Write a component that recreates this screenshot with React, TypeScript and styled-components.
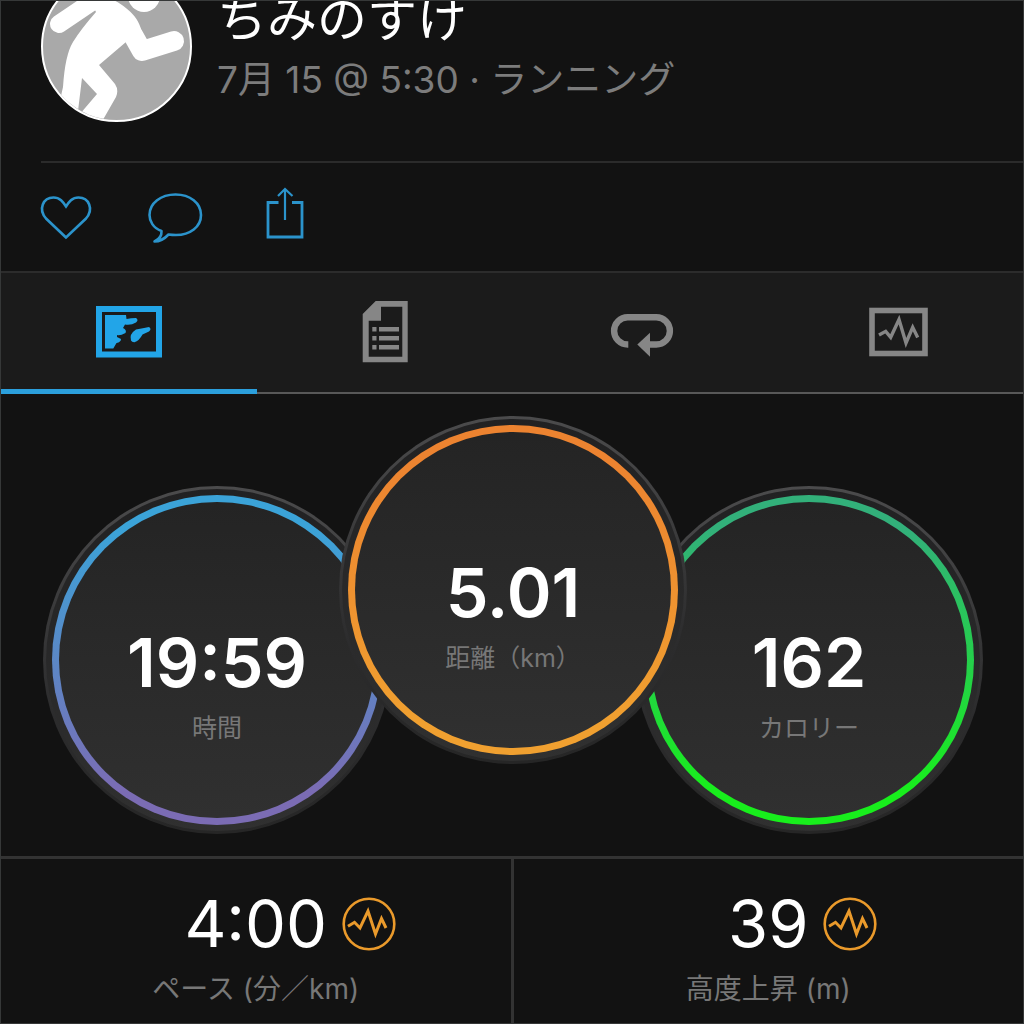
import React from 'react';
import styled, { createGlobalStyle } from 'styled-components';

const GlobalStyle = createGlobalStyle`
  *, *::before, *::after { box-sizing: border-box; }
  body {
    margin: 0;
    background: #121212;
    color: #fff;
    font-family: Inter, "Noto Sans CJK JP", sans-serif;
  }
  button {
    margin: 0;
    padding: 0;
    border: 0;
    background: none;
    cursor: pointer;
  }
  svg { display: block; overflow: visible; }
`;

const Screen = styled.main`
  display: flex;
  flex-direction: column;
  min-height: 100vh;
  border: 1px solid #363838;
  overflow: hidden;
`;

const Header = styled.header`
  display: flex;
  align-items: flex-end;
  gap: 25px;
  height: 162px;
  margin-left: 40px;
  padding-bottom: 39px;
  border-bottom: 2px solid #2b2b2b;
  overflow: hidden;
`;

const Avatar = styled.div`
  flex: none;
  width: 151px;
  height: 151px;
  border: 2px solid #fff;
  border-radius: 50%;
  background: #a9a9a9;
  overflow: hidden;
`;

const Identity = styled.div`
  display: flex;
  flex-direction: column;
  gap: 5px;
  padding-bottom: 16px;
  white-space: nowrap;
`;

const Name = styled.h1`
  margin: 0;
  font-size: 50px;
  font-weight: 400;
  line-height: 60px;
`;

const When = styled.p`
  margin: 0;
  color: #7c7c7c;
  font-size: 37px;
  line-height: 52px;
`;

const Actions = styled.div`
  display: flex;
  align-items: center;
  gap: 54px;
  height: 108px;
  padding-left: 37px;
`;

const ActionButton = styled.button`
  width: 56px;
  height: 56px;
  color: #2b93cb;
`;

const Tabs = styled.nav`
  display: grid;
  grid-template-columns: repeat(4, 1fr);
  height: 123px;
  border-top: 2px solid #2c2c2c;
  background: #1b1b1b;
`;

const Tab = styled.button<{ $active?: boolean }>`
  display: flex;
  align-items: center;
  justify-content: center;
  padding-bottom: 6px;
  color: ${({ $active }) => ($active ? '#22a5e8' : '#868686')};
  box-shadow: inset 0 ${({ $active }) => ($active ? '-5px #2b9fdc' : '-2px #585858')};
`;

const Dials = styled.section`
  display: flex;
  align-items: flex-end;
  justify-content: center;
  padding: 22px 0 22px 2px;
`;

const Dial = styled.article<{ $raised?: boolean }>`
  position: relative;
  z-index: ${({ $raised }) => ($raised ? 1 : 0)};
  flex: none;
  width: 348px;
  height: 348px;
  margin: ${({ $raised }) => ($raised ? '0 -52px 70px' : '0')};
  padding: 6px;
  border: 3px solid transparent;
  border-radius: 50%;
  background:
    linear-gradient(#212122, #303030) padding-box,
    linear-gradient(#4b4b4c, #2c2c2d 65%, #262626) border-box;
`;

const Ring = styled.div<{ $from: string; $to: string }>`
  display: flex;
  flex-direction: column;
  align-items: center;
  height: 100%;
  padding-top: 118px;
  border: 7px solid transparent;
  border-radius: 50%;
  background:
    linear-gradient(#242424, #303030) padding-box,
    linear-gradient(${({ $from, $to }) => `${$from} 10%, ${$to} 90%`}) border-box;
`;

const DialValue = styled.strong`
  font-size: 68px;
  font-weight: 600;
  line-height: 84px;
`;

const DialLabel = styled.span`
  color: #777;
  font-size: 25px;
  line-height: 48px;
`;

const Stats = styled.section`
  display: grid;
  grid-template-columns: 1fr 1fr;
  gap: 3px;
  flex: 1;
  border-top: 3px solid #333;
  background: #333;
`;

const Stat = styled.article`
  display: flex;
  flex-direction: column;
  align-items: center;
  padding-top: 25px;
  background: #121212;
`;

const StatRow = styled.div`
  display: grid;
  grid-template-columns: 1fr auto 1fr;
  align-items: center;
  gap: 15px;
  width: 100%;
`;

const StatValue = styled.strong`
  grid-column: 2;
  font-size: 65px;
  font-weight: 400;
  line-height: 80px;
`;

const StatLabel = styled.span`
  color: #777;
  font-size: 28px;
  line-height: 50px;
`;

const Runner = () => (
  <svg width="100%" height="100%" viewBox="43 -26 147 147" fill="#fff" stroke="#fff" strokeLinecap="round" aria-hidden="true">
    <circle cx="144" cy="-3" r="16" stroke="none" />
    <path d="M59 25 L96 0" strokeWidth="18" />
    <path d="M133 36 L142 52 L174 42" fill="none" strokeWidth="20" strokeLinejoin="round" />
    <path stroke="none" d="M84 -10 L106 -3 C124 6 143 17 143 43 L126 43 L99 66 L115 85 Q119 91 116 98 L100 126 L74 122 L97 95 L82 79 L78 112 L59 106 L63 88 Q65 56 73 43 Q81 30 96 13 Z" />
  </svg>
);

const HeartIcon = () => (
  <svg width="56" height="56" fill="none" stroke="currentColor" strokeWidth="2.6" aria-hidden="true">
    <path d="M28 48.500 L8 29.500 C0 20 5 8.500 15.500 8.500 C22 8.500 25 13 28 17.500 C31 13 34 8.500 40.500 8.500 C51 8.500 56 20 48 29.500 Z" />
  </svg>
);

const CommentIcon = () => (
  <svg width="56" height="56" fill="none" stroke="currentColor" strokeWidth="2.600" strokeLinejoin="round" aria-hidden="true">
    <path d="M13.500 42 C5 39 1.500 32 1.500 26 C1.500 14 13 5.500 27.500 5.500 S53 14 53 26 S42 46 28 46 Q24 46 20.500 45.500 Q14 52.500 6.500 52.500 Q14 49 13.500 42 Z" />
  </svg>
);

const ShareIcon = () => (
  <svg width="56" height="56" fill="none" stroke="currentColor" strokeWidth="2.800" aria-hidden="true">
    <path d="M20.500 13.500 H10 V48 H44 V13.500 H34" />
    <path d="M27 0 V31 M20 7 L27 0 L34.500 7" strokeWidth="2.200" />
  </svg>
);

const MapIcon = () => (
  <svg width="68" height="64" fill="currentColor" aria-hidden="true">
    <rect x="4" y="10" width="60" height="45.500" fill="none" stroke="currentColor" strokeWidth="6" />
    <path d="M10 16 H31 L31.500 20 Q36 19 41 19 Q44 21 41 23.500 Q36 26.500 30 25.500 L28 29 Q32 31 30.500 34 Q25 37 22 36 V38 L26 40 Q26 43 21.500 44 L18.300 49.500 H10 Z" />
    <path d="M36 41.500 Q34 35 41 30.500 Q48 29 54 28 Q57 30 54 32.500 L47.500 35.500 Q44 42 39.500 43.300 Q37 43.500 36 41.500 Z" />
  </svg>
);

const NotesIcon = () => (
  <svg width="68" height="64" fill="currentColor" aria-hidden="true">
    <path fillRule="evenodd" d="M12.700 15 L25.700 2 H57.700 V63.300 H12.700 Z M31 7.700 V21.700 H18.700 V57.700 H52.300 V7.700 Z" />
    <path d="M22.300 28 h4.200 v4.500 h-4.200 Z M22.300 37 h4.200 v4.500 h-4.200 Z M22.300 46 h4.200 v4.500 h-4.200 Z M29 28 h20 v4.500 h-20 Z M29 37 h20 v4.500 h-20 Z M29 46 h20 v4.500 h-20 Z" />
  </svg>
);

const LapIcon = () => (
  <svg width="68" height="64" aria-hidden="true">
    <path d="M22.300 45.500 H21.700 A13.600 13.600 0 0 1 21.700 18.300 H50.300 A13.600 13.600 0 0 1 50.300 45.500 H42" fill="none" stroke="currentColor" strokeWidth="6.400" />
    <path d="M31.300 45.500 L44 33.700 V57.700 Z" fill="currentColor" />
  </svg>
);

const ChartIcon = () => (
  <svg width="68" height="64" fill="none" stroke="currentColor" aria-hidden="true">
    <rect x="11" y="11.500" width="53" height="43" strokeWidth="5.600" />
    <path d="M18 36 L24.700 32.300 L29.700 38.300 L38 20.500 L45 44 L51.700 28.300 L56.700 38.500" strokeWidth="3.400" />
  </svg>
);

const PulseBadge = () => (
  <svg width="54" height="54" fill="none" stroke="#ea9a2b" aria-hidden="true">
    <circle cx="27" cy="27" r="25.300" strokeWidth="2.600" />
    <path d="M6 29.300 L12.500 25.300 L18 31 L26 14 L33.500 37 L39.500 21.500 L44 31" strokeWidth="3" />
  </svg>
);

const actions = [
  { name: 'いいね', Icon: HeartIcon },
  { name: 'コメント', Icon: CommentIcon },
  { name: '共有', Icon: ShareIcon },
];

const tabs = [
  { name: '概要', Icon: MapIcon, active: true },
  { name: '詳細', Icon: NotesIcon },
  { name: 'ラップ', Icon: LapIcon },
  { name: 'グラフ', Icon: ChartIcon },
];

const dials = [
  { value: '19:59', label: '時間', from: '#3ba3d8', to: '#7b6cb4' },
  { value: '5.01', label: '距離（km）', from: '#ec8330', to: '#f0a030', raised: true },
  { value: '162', label: 'カロリー', from: '#32b07a', to: '#18ee1c' },
];

const stats = [
  { value: '4:00', label: 'ペース (分／km)' },
  { value: '39', label: '高度上昇 (m)' },
];

export default function App() {
  return (
    <>
      <GlobalStyle />
      <Screen lang="ja">
        <Header>
          <Avatar><Runner /></Avatar>
          <Identity>
            <Name>ちみのすけ</Name>
            <When>7月 15 @ 5:30 · ランニング</When>
          </Identity>
        </Header>
        <Actions>
          {actions.map(({ name, Icon }) => (
            <ActionButton key={name} type="button" aria-label={name}><Icon /></ActionButton>
          ))}
        </Actions>
        <Tabs>
          {tabs.map(({ name, Icon, active }) => (
            <Tab key={name} type="button" aria-label={name} aria-current={active ? 'page' : undefined} $active={active}>
              <Icon />
            </Tab>
          ))}
        </Tabs>
        <Dials>
          {dials.map((dial) => (
            <Dial key={dial.label} $raised={dial.raised}>
              <Ring $from={dial.from} $to={dial.to}>
                <DialValue>{dial.value}</DialValue>
                <DialLabel>{dial.label}</DialLabel>
              </Ring>
            </Dial>
          ))}
        </Dials>
        <Stats>
          {stats.map((stat) => (
            <Stat key={stat.label}>
              <StatRow>
                <StatValue>{stat.value}</StatValue>
                <PulseBadge />
              </StatRow>
              <StatLabel>{stat.label}</StatLabel>
            </Stat>
          ))}
        </Stats>
      </Screen>
    </>
  );
}
